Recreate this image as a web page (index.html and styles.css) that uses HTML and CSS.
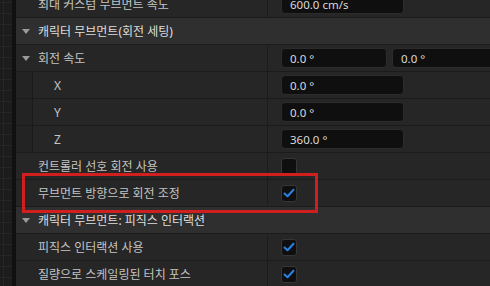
FILE: index.html
```html
<!DOCTYPE html>
<html lang="ko">
<head>
  <meta charset="UTF-8" />
  <title>디테일 패널</title>
  <link rel="stylesheet" href="styles.css">
</head>
<body>
  <div class="gutter"></div>
  <div class="edge"></div>

  <div class="panel">
    <div class="row">
      <div class="name">최대 커스텀 무브먼트 속도</div>
      <div class="value"><div class="field">600.0 cm/s</div></div>
    </div>

    <div class="row cat">
      <div class="name"><span class="arrow"></span>캐릭터 무브먼트(회전 세팅)</div>
    </div>

    <div class="row">
      <div class="name"><span class="arrow"></span>회전 속도</div>
      <div class="value">
        <div class="field short">0.0 °</div>
        <div class="field short">0.0 °</div>
      </div>
    </div>

    <div class="row child">
      <div class="indent"></div>
      <div class="name">X</div>
      <div class="value"><div class="field">0.0 °</div></div>
    </div>
    <div class="row child">
      <div class="indent"></div>
      <div class="name">Y</div>
      <div class="value"><div class="field">0.0 °</div></div>
    </div>
    <div class="row child">
      <div class="indent"></div>
      <div class="name">Z</div>
      <div class="value"><div class="field">360.0 °</div></div>
    </div>

    <div class="row">
      <div class="name">컨트롤러 선호 회전 사용</div>
      <div class="value"><div class="check"></div></div>
    </div>
    <div class="row">
      <div class="name">무브먼트 방향으로 회전 조정</div>
      <div class="value">
        <div class="check">
          <svg width="12" height="10" viewBox="0 0 12 10"><path d="M1.5 5.5 L4.5 8.2 L10.5 1.8" fill="none" stroke="#2a82e4" stroke-width="2" stroke-linecap="round" stroke-linejoin="round"/></svg>
        </div>
      </div>
    </div>

    <div class="row cat">
      <div class="name"><span class="arrow"></span>캐릭터 무브먼트: 피직스 인터랙션</div>
    </div>

    <div class="row">
      <div class="name">피직스 인터랙션 사용</div>
      <div class="value">
        <div class="check">
          <svg width="12" height="10" viewBox="0 0 12 10"><path d="M1.5 5.5 L4.5 8.2 L10.5 1.8" fill="none" stroke="#2a82e4" stroke-width="2" stroke-linecap="round" stroke-linejoin="round"/></svg>
        </div>
      </div>
    </div>
    <div class="row">
      <div class="name">질량으로 스케일링된 터치 포스</div>
      <div class="value">
        <div class="check">
          <svg width="12" height="10" viewBox="0 0 12 10"><path d="M1.5 5.5 L4.5 8.2 L10.5 1.8" fill="none" stroke="#2a82e4" stroke-width="2" stroke-linecap="round" stroke-linejoin="round"/></svg>
        </div>
      </div>
    </div>
  </div>

  <div class="highlight"></div>
</body>
</html>
```

FILE: styles.css
```css
body {
  margin: 0;
  height: 286px;
  overflow: hidden;
  display: flex;
  background: #1a1a1a;
  font-family: "Noto Sans", "Noto Sans CJK KR", sans-serif;
  font-size: 12px;
  color: #c4c4c4;
}

.gutter {
  width: 12px;
  background-color: #1c1c1c;
  background-image:
    linear-gradient(#262626 1px, transparent 1px),
    linear-gradient(90deg, #262626 1px, transparent 1px);
  background-size: 11px 11px;
  background-position: 3px 2px;
}

.edge {
  width: 4px;
  background: #101010;
}

.panel {
  flex: 1;
  min-width: 0;
  margin-top: -9px;
  background: #252525;
}

.row {
  display: flex;
  height: 27px;
  box-sizing: border-box;
  border-bottom: 1px solid #1b1b1b;
  background: #262626;
}

.name {
  width: 252px;
  flex-shrink: 0;
  box-sizing: border-box;
  padding-left: 22px;
  display: flex;
  align-items: center;
  white-space: nowrap;
  border-right: 1px solid #1c1c1c;
}

.value {
  flex: 1;
  min-width: 0;
  display: flex;
  align-items: center;
  gap: 5px;
  padding-left: 13px;
  overflow: hidden;
}

.cat {
  background: #2f2f2f;
  color: #dedede;
}

.cat .name {
  border-right: none;
  width: auto;
}

.arrow {
  width: 0;
  height: 0;
  border-left: 4px solid transparent;
  border-right: 4px solid transparent;
  border-top: 5px solid #9a9a9a;
  margin-left: -16px;
  margin-right: 8px;
}

.child .indent {
  width: 16px;
  flex-shrink: 0;
  background: #232323;
  border-right: 1px solid #1a1a1a;
}

.child .name {
  width: 235px;
  padding-left: 21px;
}

.field {
  width: 123px;
  height: 20px;
  box-sizing: border-box;
  flex-shrink: 0;
  padding-left: 8px;
  display: flex;
  align-items: center;
  background: #0f0f0f;
  border: 1px solid #2c2c2c;
  border-radius: 4px;
  color: #dadada;
  font-size: 11.5px;
}

.field.short {
  width: 106px;
}

.check {
  width: 16px;
  height: 17px;
  box-sizing: border-box;
  display: flex;
  align-items: center;
  justify-content: center;
  background: #0f0f0f;
  border: 1px solid #363636;
  border-radius: 3px;
}

.highlight {
  position: absolute;
  left: 22px;
  top: 173px;
  width: 296px;
  height: 40px;
  box-sizing: border-box;
  border: 3px solid #cf1f1f;
}
```
